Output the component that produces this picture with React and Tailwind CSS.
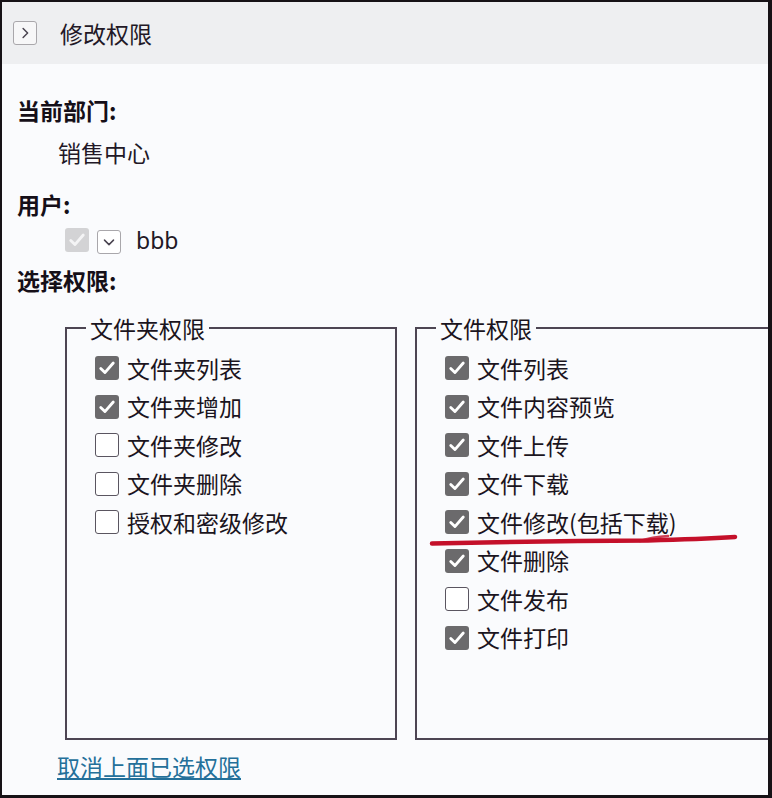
import React from "react";

const FONT = { fontFamily: '"Noto Sans CJK SC", "Noto Sans", sans-serif' };

const folderPerms = [
  { label: "文件夹列表", checked: true },
  { label: "文件夹增加", checked: true },
  { label: "文件夹修改", checked: false },
  { label: "文件夹删除", checked: false },
  { label: "授权和密级修改", checked: false },
];

const filePerms = [
  { label: "文件列表", checked: true },
  { label: "文件内容预览", checked: true },
  { label: "文件上传", checked: true },
  { label: "文件下载", checked: true },
  { label: "文件修改(包括下载)", checked: true },
  { label: "文件删除", checked: true },
  { label: "文件发布", checked: false },
  { label: "文件打印", checked: true },
];

const Check = ({ color = "#ffffff" }) => (
  <svg viewBox="0 0 24 24" className="w-[20px] h-[20px]">
    <path
      d="M4.5 12.5l5 5L19.5 6"
      fill="none"
      stroke={color}
      strokeWidth="3.4"
      strokeLinecap="round"
      strokeLinejoin="round"
    />
  </svg>
);

const Box = ({ checked }) =>
  checked ? (
    <div className="w-6 h-6 rounded-[3px] bg-[#6b6a6c] flex items-center justify-center shrink-0">
      <Check />
    </div>
  ) : (
    <div className="w-6 h-6 rounded-[3px] border-[1.5px] border-[#5a5560] bg-white shrink-0" />
  );

const PermBox = ({ title, items, width }) => (
  <fieldset
    className={`${width} h-[427px] border-2 border-[#4d4553] pl-[19px] pt-[6px] shrink-0`}
  >
    <legend className="px-[4px] text-[23px] leading-[30px] text-[#1a1420]">{title}</legend>
    <div className="flex flex-col ml-[9px]">
      {items.map((it) => (
        <label key={it.label} className="h-[38.5px] flex items-center gap-2 text-[23px] text-[#1a1420]">
          <Box checked={it.checked} />
          <span className="leading-none">{it.label}</span>
        </label>
      ))}
    </div>
  </fieldset>
);

export default function App() {
  return (
    <div
      style={FONT}
      className="relative w-[772px] h-[798px] overflow-hidden bg-[#fafbfd] border-l-2 border-t-2 border-r-4 border-b-[3px] border-[#161216] flex flex-col"
    >
      {/* header */}
      <div className="h-[62px] bg-[#eeeff1] flex items-center pl-[11px] shrink-0">
        <button className="w-6 h-6 rounded-[3px] border border-[#a9a7ab] bg-[#f7f7f8] flex items-center justify-center">
          <svg viewBox="0 0 24 24" className="w-[18px] h-[18px]">
            <path d="M9.5 6l6 6-6 6" fill="none" stroke="#4a4450" strokeWidth="2" strokeLinecap="round" strokeLinejoin="round" />
          </svg>
        </button>
        <span className="ml-[23px] text-[23px] text-[#221826]">修改权限</span>
      </div>

      {/* body */}
      <div className="flex flex-col pl-[15px] pt-[25px]">
        <div className="h-[42px] flex items-center text-[23px] font-bold text-[#150f18]">当前部门:</div>
        <div className="h-[42px] flex items-center pl-[41px] text-[23px] text-[#221826]">销售中心</div>
        <div className="h-[42px] mt-[10px] flex items-center text-[23px] font-bold text-[#150f18]">用户:</div>
        <div className="h-[30px] flex items-center pl-[48px]">
          <div className="w-6 h-6 rounded-[3px] bg-[#d3d3d5] flex items-center justify-center">
            <Check color="#f4f4f5" />
          </div>
          <div className="ml-[8px] w-6 h-6 rounded-[3px] border border-[#a9a7ab] bg-white flex items-center justify-center mt-[3px]">
            <svg viewBox="0 0 24 24" className="w-[18px] h-[18px]">
              <path d="M6 9.5l6 6 6-6" fill="none" stroke="#4a4450" strokeWidth="2" strokeLinecap="round" strokeLinejoin="round" />
            </svg>
          </div>
          <span className="ml-[15px] text-[23px] text-[#221826]" style={{ fontFamily: '"Noto Sans", sans-serif' }}>
            bbb
          </span>
        </div>
        <div className="h-[42px] mt-[4px] flex items-center text-[23px] font-bold text-[#150f18]">选择权限:</div>

        <div className="flex gap-[18px] mt-[12px] pl-[48px]">
          <PermBox title="文件夹权限" items={folderPerms} width="w-[332px]" />
          <PermBox title="文件权限" items={filePerms} width="w-[420px]" />
        </div>

        <a href="#" className="mt-[12px] ml-[40px] text-[23px] leading-[28px] text-[#24709a] underline underline-offset-2 self-start">
          取消上面已选权限
        </a>
      </div>

      {/* red hand-drawn underline */}
      <svg className="absolute left-0 top-0 pointer-events-none" width="772" height="798" viewBox="2 2 772 798">
        <path
          d="M432 543.5 Q 540 541 648 540.5 Q 700 539 735 537"
          fill="none"
          stroke="#c4102a"
          strokeWidth="4.5"
          strokeLinecap="round"
        />
        <path d="M640 541 Q 652 537 668 536" fill="none" stroke="#c4102a" strokeWidth="2.5" strokeLinecap="round" opacity="0.8" />
      </svg>
    </div>
  );
}
